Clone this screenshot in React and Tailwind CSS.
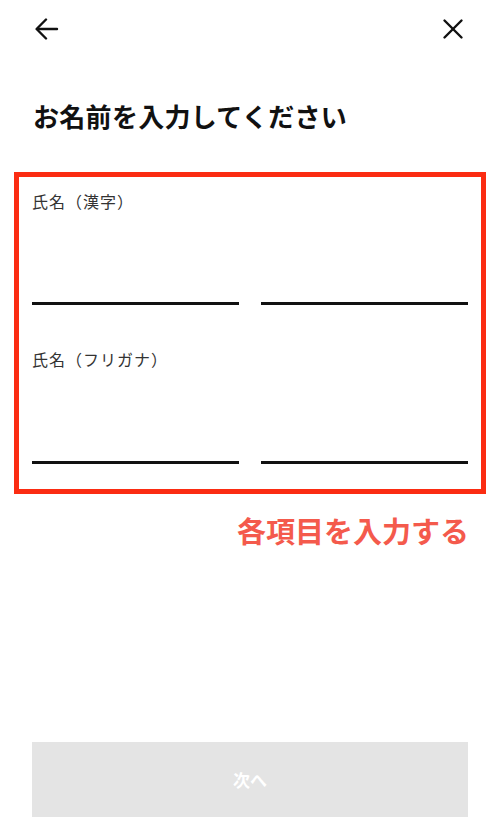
import React from "react";

export default function App() {
  return (
    <div className="w-[500px] h-[831px] bg-white flex flex-col font-['Noto_Sans_CJK_JP',sans-serif] text-[#111]">
      <header className="h-[56px] flex items-center justify-between pl-[35px] pr-[36px] pt-[2px]">
        <svg width="24" height="24" viewBox="0 0 24 24" fill="none" stroke="#111" strokeWidth="2.4" strokeLinecap="round" strokeLinejoin="round">
          <path d="M22 12H2.5" />
          <path d="M11 2.5L1.6 12 11 21.5" />
        </svg>
        <svg width="22" height="22" viewBox="0 0 22 22" fill="none" stroke="#111" strokeWidth="2.4" strokeLinecap="round">
          <path d="M2.5 2.5l17 17" />
          <path d="M19.5 2.5l-17 17" />
        </svg>
      </header>

      <h1 className="mt-[42px] ml-[33px] text-[26px] leading-[36px] font-bold tracking-[0.3px]">
        お名前を入力してください
      </h1>

      <div className="mt-[38px] mx-[14px] h-[322px] border-[5px] border-[#fb2c12] px-[13px] pt-[14px]">
        <div className="text-[16px] leading-[21px] tracking-[1px] text-[#333]">氏名（漢字）</div>
        <div className="flex gap-[22px]">
          <div className="flex-1 h-[93px] border-b-[3px] border-[#111]" />
          <div className="flex-1 h-[93px] border-b-[3px] border-[#111]" />
        </div>
        <div className="mt-[44px] text-[16px] leading-[21px] tracking-[1px] text-[#333]">氏名（フリガナ）</div>
        <div className="flex gap-[22px]">
          <div className="flex-1 h-[94px] border-b-[3px] border-[#111]" />
          <div className="flex-1 h-[94px] border-b-[3px] border-[#111]" />
        </div>
      </div>

      <div className="mt-[16px] pr-[31px] text-right text-[29px] leading-[40px] font-bold text-[#f45a4c]">
        各項目を入力する
      </div>

      <button className="mt-auto mb-[14px] mx-[32px] h-[75px] bg-[#e4e4e4] text-white text-[17px] font-bold flex items-center justify-center">
        次へ
      </button>
    </div>
  );
}
